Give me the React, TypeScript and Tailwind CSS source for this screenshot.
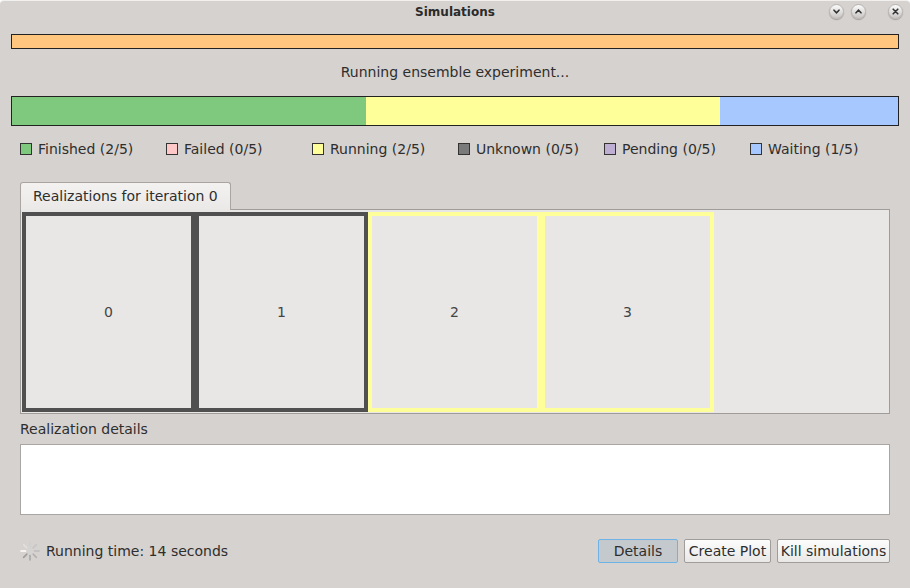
import React from 'react';

const LEGEND = [
  { label: 'Finished (2/5)', color: 'bg-[#7fc97f]' },
  { label: 'Failed (0/5)', color: 'bg-[#ffc8c8]' },
  { label: 'Running (2/5)', color: 'bg-[#ffff99]' },
  { label: 'Unknown (0/5)', color: 'bg-[#7a7a7a]' },
  { label: 'Pending (0/5)', color: 'bg-[#beaed4]' },
  { label: 'Waiting (1/5)', color: 'bg-[#a6c8ff]' },
];

const CELLS = [
  { id: 0, border: 'border-[#505050]' },
  { id: 1, border: 'border-[#505050]' },
  { id: 2, border: 'border-[#ffff99]' },
  { id: 3, border: 'border-[#ffff99]' },
];

const TitleButton: React.FC<{ kind: 'down' | 'up' | 'close' }> = ({ kind }) => (
  <div className="w-[15px] h-[15px] rounded-full bg-gradient-to-b from-[#fbfbfb] to-[#c9c6c4] border border-[#b8b4b1] flex items-center justify-center shadow-[0_1px_1px_rgba(0,0,0,0.25)]">
    <svg width="9" height="9" viewBox="0 0 9 9" fill="none" stroke="#333" strokeWidth="1.6" strokeLinecap="round">
      {kind === 'down' && <path d="M2 3.2 L4.5 5.8 L7 3.2" />}
      {kind === 'up' && <path d="M2 5.8 L4.5 3.2 L7 5.8" />}
      {kind === 'close' && <path d="M2.2 2.2 L6.8 6.8 M6.8 2.2 L2.2 6.8" />}
    </svg>
  </div>
);

const Spinner = () => {
  const shades = ['#ffffff', '#e0e0e0', '#d0d0d0', '#c6c6c6', '#bcbcbc', '#b2b2b2', '#a8a8a8', '#9e9e9e'];
  return (
    <svg width="20" height="20" viewBox="0 0 20 20">
      {shades.map((c, i) => {
        const a = (Math.PI / 4) * i + Math.PI;
        const x1 = 10 + Math.cos(a) * 4.5;
        const y1 = 10 + Math.sin(a) * 4.5;
        const x2 = 10 + Math.cos(a) * 9;
        const y2 = 10 + Math.sin(a) * 9;
        return <line key={i} x1={x1} y1={y1} x2={x2} y2={y2} stroke={c} strokeWidth="1.6" strokeLinecap="round" />;
      })}
    </svg>
  );
};

export default function App() {
  return (
    <div className="w-[910px] h-[588px] bg-[#d6d2cf] flex flex-col text-[14px] text-[#2e2e2e] font-['DejaVu_Sans',sans-serif] border-t border-[#f2f0ef] rounded-t-[4px] overflow-hidden">
      {/* title bar */}
      <div className="relative h-[22px] flex items-center justify-center">
        <span className="font-bold text-[12px] text-[#2b2b2b]">Simulations</span>
        <div className="absolute right-[7px] top-[3px] flex items-center">
          <TitleButton kind="down" />
          <div className="w-[7px]" />
          <TitleButton kind="up" />
          <div className="w-[22px]" />
          <TitleButton kind="close" />
        </div>
      </div>

      <div className="px-[11px] pt-[11px]">
        <div className="h-[15px] bg-[#ffc67f] border border-[#222]" />
        <div className="h-[47px] flex items-center justify-center">Running ensemble experiment...</div>
        <div className="h-[30px] border border-[#222] flex">
          <div className="w-[354px] bg-[#7fc97f]" />
          <div className="w-[354px] bg-[#ffff99]" />
          <div className="flex-1 bg-[#a6c8ff]" />
        </div>
      </div>

      <div className="px-[20px]">
        <div className="h-[46px] flex items-center">
          {LEGEND.map((l) => (
            <div key={l.label} className="w-[146px] shrink-0 flex items-center gap-[6px]">
              <div className={`w-[12px] h-[12px] border border-[#333] ${l.color}`} />
              <span className="whitespace-nowrap">{l.label}</span>
            </div>
          ))}
        </div>

        <div className="mt-[10px] flex">
          <div className="w-[211px] h-[28px] -mb-px relative z-10 bg-gradient-to-b from-[#f3f2f1] to-[#ebe9e8] border border-[#a9a5a2] border-b-0 rounded-t-[3px] flex items-center pl-[12px]">
            Realizations for iteration 0
          </div>
        </div>
        <div className="h-[205px] bg-[#e9e7e5] border border-[#a09c99] pt-[2px] pl-[1px] flex">
          {CELLS.map((c) => (
            <div key={c.id} className={`w-[173px] h-[200px] border-[4px] ${c.border} flex items-center justify-center text-[#444]`}>
              {c.id}
            </div>
          ))}
        </div>

        <div className="h-[30px] flex items-center">Realization details</div>
        <div className="h-[71px] bg-white border border-[#a9a5a2]" />

        <div className="h-[72px] flex items-center">
          <Spinner />
          <span className="ml-[6px]">Running time: 14 seconds</span>
          <div className="flex-1" />
          <div className="flex gap-[6px]">
            <button className="w-[80px] h-[24px] bg-[#c3c9cd] border border-[#6fb3e6] rounded-[2px]">Details</button>
            <button className="w-[87px] h-[24px] bg-gradient-to-b from-[#fcfcfc] to-[#e9e8e7] border border-[#a09c99] rounded-[2px]">Create Plot</button>
            <button className="w-[113px] h-[24px] bg-gradient-to-b from-[#fcfcfc] to-[#e9e8e7] border border-[#a09c99] rounded-[2px]">Kill simulations</button>
          </div>
        </div>
      </div>
    </div>
  );
}
